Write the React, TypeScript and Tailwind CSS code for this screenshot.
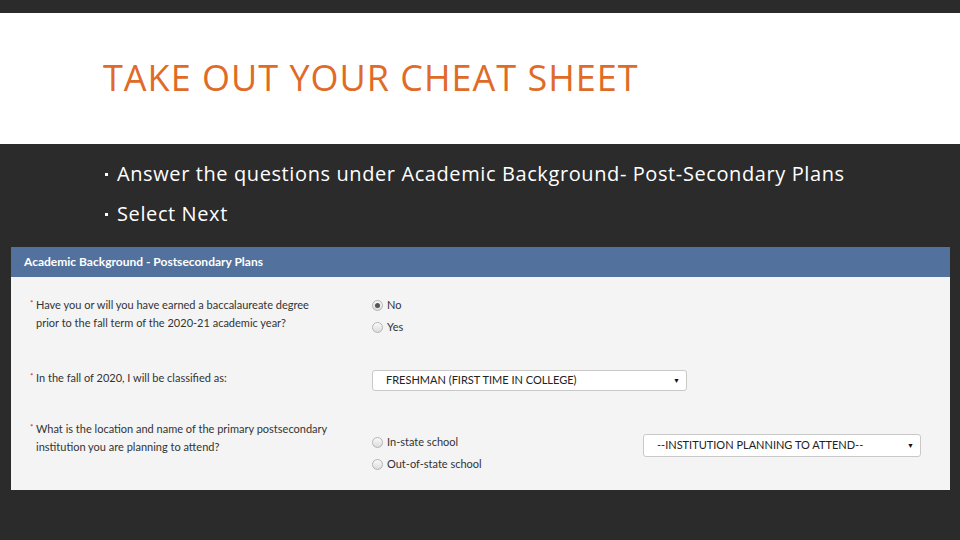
import React from "react";

function Radio({ checked, label }: { checked?: boolean; label: string }) {
  return (
    <div className="flex h-[22px] items-center gap-[4px]">
      <span className="flex h-[11px] w-[11px] items-center justify-center rounded-full border border-[#b4b4b4] bg-gradient-to-b from-[#fafafa] to-[#dcdcdc]">
        {checked && <span className="h-[5px] w-[5px] rounded-full bg-[#555]" />}
      </span>
      <span>{label}</span>
    </div>
  );
}

function Select({ value, className }: { value: string; className: string }) {
  return (
    <div
      className={
        "flex items-center justify-between rounded-[3px] border border-[#c9c9c9] bg-white pl-[13px] pr-[6px] text-[11px] text-[#222] " +
        className
      }
    >
      <span>{value}</span>
      <span className="text-[7px] leading-none text-[#111]">▼</span>
    </div>
  );
}

function Required({ children }: { children: React.ReactNode }) {
  return (
    <div className="flex">
      <span className="w-[6px] text-[8px] leading-[14px] text-[#e02020]">*</span>
      <div>{children}</div>
    </div>
  );
}

export default function App() {
  return (
    <div className="flex h-[540px] w-[960px] flex-col overflow-hidden bg-[#2b2b2b] font-['Open_Sans',sans-serif]">
      <div className="mt-[13px] h-[131px] bg-white px-[103px] pt-[47px]">
        <h1 className="text-[36px] font-normal leading-[36px] tracking-[1px] text-[#e06b28]">
          TAKE OUT YOUR CHEAT SHEET
        </h1>
      </div>

      <ul className="mt-[16px] flex flex-col gap-[12px] pl-[105px] text-[20px] leading-[28px] tracking-[0.6px] text-white">
        <li className="flex items-center">
          <span className="mr-[9px] h-[3px] w-[3px] bg-white" />
          Answer the questions under Academic Background- Post-Secondary Plans
        </li>
        <li className="flex items-center">
          <span className="mr-[9px] h-[3px] w-[3px] bg-white" />
          Select Next
        </li>
      </ul>

      <div className="mx-[11px] mt-[19px] flex h-[243px] w-[939px] flex-col font-['Lato',sans-serif]">
        <div className="flex h-[30px] items-center bg-[#52719c] pl-[13px] text-[12px] font-bold text-white">
          Academic Background - Postsecondary Plans
        </div>
        <div className="flex-1 bg-[#f4f4f4] pl-[19px] pt-[17px] text-[11px] text-[#333]">
          <div className="flex">
            <div className="w-[342px] pt-[2px] leading-[18px]">
              <Required>
                Have you or will you have earned a baccalaureate degree
                <br />
                prior to the fall term of the 2020-21 academic year?
              </Required>
            </div>
            <div className="flex flex-col">
              <Radio checked label="No" />
              <Radio label="Yes" />
            </div>
          </div>

          <div className="mt-[31px] flex">
            <div className="w-[342px] leading-[18px]">
              <Required>In the fall of 2020, I will be classified as:</Required>
            </div>
            <Select value="FRESHMAN (FIRST TIME IN COLLEGE)" className="mt-[1px] h-[21px] w-[315px]" />
          </div>

          <div className="mt-[29px] flex">
            <div className="w-[342px] leading-[18px]">
              <Required>
                What is the location and name of the primary postsecondary
                <br />
                institution you are planning to attend?
              </Required>
            </div>
            <div className="mt-[11px] flex w-[271px] flex-col">
              <Radio label="In-state school" />
              <Radio label="Out-of-state school" />
            </div>
            <Select value="--INSTITUTION PLANNING TO ATTEND--" className="mt-[14px] h-[23px] w-[278px]" />
          </div>
        </div>
      </div>
    </div>
  );
}
